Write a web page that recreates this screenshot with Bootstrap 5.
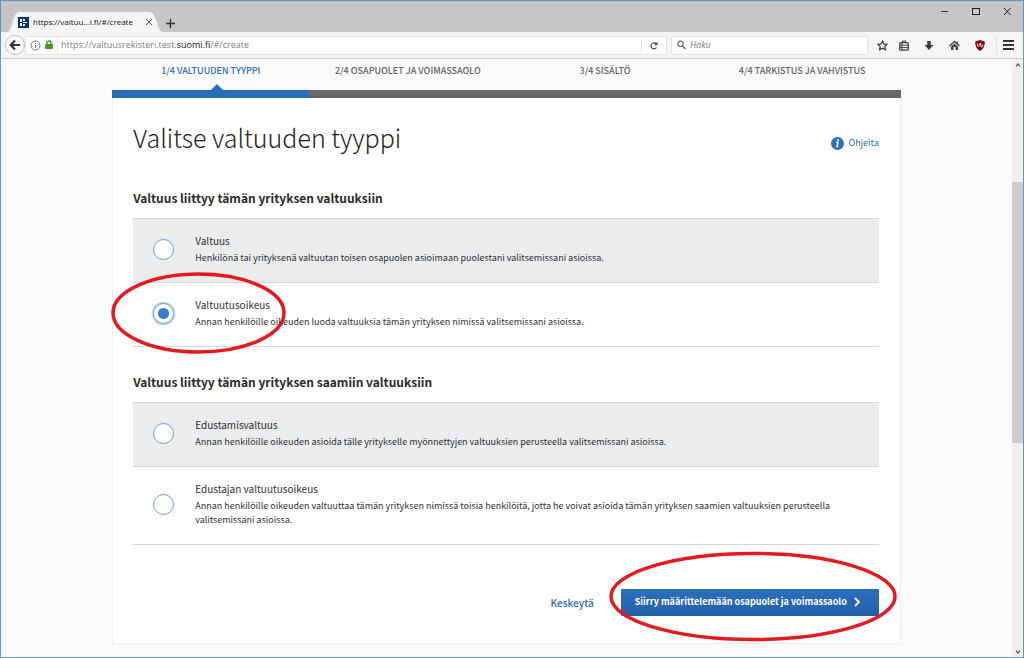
<!DOCTYPE html>
<html lang="fi">
<head>
<meta charset="utf-8">
<meta name="viewport" content="width=device-width, initial-scale=1">
<title>Valitse valtuuden tyyppi</title>
<link href="https://cdn.jsdelivr.net/npm/bootstrap@5.3.0/dist/css/bootstrap.min.css" rel="stylesheet">
<style>
:root { --brand: #2a6ebb; --ink: #2f3133; --line: #d3d6d8; --chrome: "Open Sans", "Noto Sans", sans-serif; }
body { font-family: "Noto Sans CJK SC", "Noto Sans", sans-serif; font-size: 9px; line-height: 14px; color: var(--ink); }
button, input { font: inherit; }
svg { display: block; flex: none; }
.browser { height: 100vh; border: 1px solid #5f9ac9; background: #fafafa; overflow: hidden; }
.icon-btn { border: 0; background: none; padding: 0; color: #3d3d3d; }

/* title bar */
.titlebar { height: 31px; background: #c6c6c6; }
.tab-shape { position: relative; width: 154px; height: 20px; margin-left: 7px; color: #111; font: 8px/20px var(--chrome); }
.tab-shape > svg { position: absolute; inset: 0; }
.tab-inner { position: relative; padding: 0 5px 0 10px; }
.win-controls { padding: 5px 10px 0 0; gap: 20px; }

/* tool bar */
.toolbar { height: 27px; background: #f5f5f5; border-bottom: 1px solid #cfcfcf; font: 9px/18px var(--chrome); padding: 0 9px 0 4px; }
.back-btn { width: 20px; height: 20px; border: 1px solid #bdbdbd; border-radius: 50%; background: #fcfcfc; z-index: 1; }
.field { height: 19px; background: #fff; border: 1px solid #e3e3e3; }
.address { color: #808080; border-left: 1px solid #e6e6e6; padding-left: 3px; }
.address b { font-weight: 400; color: #111; }
.reload { border-left: 1px solid #ddd; padding: 0 8px; }
.search-field { width: 197px; padding: 0 5px; gap: 4px; }
.search-field input { border: 0; outline: 0; background: none; padding: 0; min-width: 0; font-style: italic; }
.search-field input::placeholder { color: #777; opacity: 1; }
.tools { gap: 11px; padding-left: 9px; }
.menu-sep { border-left: 1px solid #e2e2e2; padding-left: 6px; }

/* page */
.viewport { min-height: 0; }
.sheet { width: 78%; min-width: 560px; margin: 0 auto; }
.steps { list-style: none; height: 31px; padding: 4px 0 0; margin: 0; color: #5f6366; font-size: 9px; line-height: 16px; font-weight: 500; text-align: center; text-transform: uppercase; }
.steps .current { color: var(--brand); position: relative; }
.steps .current::after { content: ""; position: absolute; top: 21px; left: 50%; border: 6px solid transparent; border-top: 0; border-bottom-color: var(--brand); }
.bar { height: 8px; background: #65686a; }
.bar > div { width: 25%; height: 100%; background: var(--brand); }
.panel { background: #fff; border: 1px solid #efefef; border-top: 0; padding: 19px 21px 27px 20px; }
h1 { font-size: 25px; line-height: 40px; font-weight: 300; margin: 0; color: #222; }
h2 { font-size: 12px; line-height: 20px; font-weight: 700; margin: 0; color: #2b2b2b; }
.heading { margin-bottom: 31px; }
.help { color: var(--brand); gap: 4px; padding-top: 12px; text-decoration: none; }
.options { border-top: 1px solid var(--line); margin: 10px 0 25px; }
.option { position: relative; border-bottom: 1px solid var(--line); padding: 15px 40px 17px 20px; gap: 20px; }
.option:first-child { background: #ebeced; }
.option .form-check-input { flex: none; width: 21px; height: 21px; margin: 0 1px 0 0; border: 1px solid #6f9bd0; background-color: #fff; }
.option .form-check-input:checked { background-color: #fff; background-image: radial-gradient(circle, #3a7cc5 5px, #fff 6px); box-shadow: 0 0 2px 1px #a9c8e8; }
.option-name { display: block; font-size: 10px; line-height: 14px; margin-bottom: 3px; }
.option-text { display: block; }
.actions { gap: 27px; padding-top: 19px; }
.actions a { color: var(--brand); font-size: 10px; font-weight: 500; text-decoration: none; }
.next-btn { border: 0; border-radius: 1px; padding: 6px 19px 7px 14px; font-weight: 700; color: #fff; background: linear-gradient(#2b70bf, #245fa6); gap: 7px; }
.ring { position: absolute; pointer-events: none; overflow: visible; z-index: 2; }
.ring ellipse { fill: none; stroke: #e21b23; stroke-width: 3.5; }
.ring-option { left: -21px; top: -10px; width: 173px; height: 80px; }
.ring-next { left: -11px; top: -36px; width: 286px; height: 87px; }
.scrollbar { width: 11px; background: #f0f0f0; flex: none; padding: 3px 0 2px; }
.scroll-space { flex: 114 0 0; }
.scroll-thumb { flex: 262 0 0; background: #cdcdcd; }
.scroll-rest { flex: 206 0 0; }
</style>
</head>
<body>
<div class="browser d-flex flex-column">
  <header>
    <div class="titlebar d-flex align-items-end">
      <div class="tab-shape">
        <svg width="154" height="20" viewBox="0 0 154 20"><path d="M0 20C5 18 4 0 12 0H141C149 0 149 18 154 20Z" fill="#f5f5f5"/></svg>
        <div class="tab-inner d-flex align-items-center">
          <svg width="11" height="11" viewBox="0 0 11 11"><rect width="11" height="11" fill="#05347c"/><path d="M2 2h2v3H2zM2 6h2v3H2zM5 5h4v1H5zM5 2h2v2H5zM5 7h2v2H5z" fill="#fff"/></svg>
          <span class="ms-1 flex-grow-1 text-nowrap">https://valtuu...i.fi/#/create</span>
          <button class="icon-btn me-1" aria-label="Sulje välilehti"><svg width="8" height="8" viewBox="0 0 8 8"><path d="M1 1l6 6M7 1L1 7" stroke="#555"/></svg></button>
        </div>
      </div>
      <button class="icon-btn ms-1 mb-1" aria-label="Uusi välilehti"><svg width="9" height="9" viewBox="0 0 9 9"><path d="M4.500 0v9M0 4.500h9" stroke="#333" stroke-width="1.400"/></svg></button>
      <div class="win-controls d-flex ms-auto align-self-start">
        <button class="icon-btn" aria-label="Pienennä"><svg width="10" height="10" viewBox="0 0 10 10"><path d="M0 5.500h7" stroke="#333"/></svg></button>
        <button class="icon-btn" aria-label="Suurenna"><svg width="10" height="10" viewBox="0 0 10 10"><rect x="1.500" y="2.500" width="7" height="6" fill="none" stroke="#222"/></svg></button>
        <button class="icon-btn" aria-label="Sulje"><svg width="12" height="10" viewBox="0 0 12 10"><path d="M3 2l6.500 7M9.500 2L3 9" stroke="#222"/></svg></button>
      </div>
    </div>
    <div class="toolbar d-flex align-items-center">
      <button class="back-btn icon-btn p-0 d-flex align-items-center justify-content-center flex-shrink-0" aria-label="Takaisin"><svg width="12" height="12" viewBox="0 0 12 12"><path d="M6 1.500L1.800 6 6 10.500M2 6h9" fill="none" stroke="#333" stroke-width="2.200"/></svg></button>
      <div class="field d-flex align-items-center flex-grow-1">
        <svg class="ms-1" width="11" height="11" viewBox="0 0 11 11"><circle cx="5.500" cy="5.500" r="4.500" fill="none" stroke="#777"/><path d="M5.500 5v3M5.500 2.800v1.200" stroke="#666"/></svg>
        <svg class="mx-1" width="8" height="10" viewBox="0 0 8 10"><path d="M2 5V3a2 2 0 0 1 4 0v2" fill="none" stroke="#4a9a23" stroke-width="1.500"/><rect y="4" width="8" height="5" rx="1" fill="#4a9a23"/></svg>
        <span class="address flex-grow-1 text-nowrap">https://valtuusrekisteri.test.<b>suomi.fi</b>/#/create</span>
        <button class="icon-btn reload" aria-label="Lataa uudelleen"><svg width="8" height="9" viewBox="0 0 8 9"><path d="M6.500 6.500A3 3 0 1 1 6 2.500" fill="none" stroke="#555" stroke-width="1.300"/><path d="M7.500 .5v3.800H4z" fill="#555"/></svg></button>
      </div>
      <div class="field search-field d-flex align-items-center ms-1">
        <svg width="9" height="10" viewBox="0 0 9 10"><circle cx="3.500" cy="3.800" r="2.700" fill="none" stroke="#666" stroke-width="1.200"/><path d="M5.500 6L8.500 9" stroke="#666" stroke-width="1.500"/></svg>
        <input class="flex-grow-1" type="text" placeholder="Haku" aria-label="Haku">
      </div>
      <div class="tools d-flex align-items-center">
        <button class="icon-btn" aria-label="Kirjanmerkki"><svg width="11" height="11" viewBox="0 0 11 11"><path d="M5.500 1l1.400 2.900 3.200.4-2.300 2.200.6 3.200-2.900-1.500-2.900 1.500.6-3.200L.9 4.300l3.200-.4z" fill="none" stroke="#444" stroke-width="1.300"/></svg></button>
        <button class="icon-btn" aria-label="Kirjanmerkit"><svg width="10" height="11" viewBox="0 0 10 11"><rect x=".7" y="2.700" width="8.600" height="7.500" rx="1" fill="none" stroke="#444" stroke-width="1.300"/><path d="M3.500 3V1h3v2M1 5.200h8M1 7.600h8M3 3v7" fill="none" stroke="#444"/></svg></button>
        <button class="icon-btn ms-1" aria-label="Lataukset"><svg width="10" height="11" viewBox="0 0 10 11"><path d="M3.200 1h3.600v4h2.700L5 10 .5 5h2.700z" fill="#3d3d3d"/></svg></button>
        <button class="icon-btn ms-1" aria-label="Etusivu"><svg width="11" height="11" viewBox="0 0 11 11"><path d="M.5 6l5-4.500 5 4.500M8.500 1.500v2" fill="none" stroke="#444" stroke-width="1.400"/><path d="M2 6.500L5.500 3.400 9 6.500V10H6.500V7h-2v3H2z" fill="#444"/></svg></button>
        <button class="icon-btn ms-1" aria-label="uBlock"><svg width="10" height="11" viewBox="0 0 10 11"><path d="M5 0l4.800 1.500C10 6 8.500 9 5 11 1.500 9 0 6 .2 1.500z" fill="#800610"/><path d="M2.300 3.500v1.700a1 1 0 0 0 2 0V3.500M5.500 3v3a1.200 1.200 0 1 0 1-1.500" fill="none" stroke="#fff" stroke-width=".8"/></svg></button>
        <button class="icon-btn menu-sep" aria-label="Valikko"><svg width="11" height="18" viewBox="0 0 11 18"><path d="M0 5h11M0 9h11M0 13h11" stroke="#333" stroke-width="2"/></svg></button>
      </div>
    </div>
  </header>

  <div class="viewport d-flex flex-grow-1">
    <main class="flex-grow-1 overflow-hidden">
      <div class="sheet">
        <ol class="steps row g-0">
          <li class="col-3 current" aria-current="step">1/4 Valtuuden tyyppi</li>
          <li class="col-3">2/4 Osapuolet ja voimassaolo</li>
          <li class="col-3">3/4 Sisältö</li>
          <li class="col-3">4/4 Tarkistus ja vahvistus</li>
        </ol>
        <div class="bar"><div></div></div>
        <form class="panel">
          <div class="heading d-flex justify-content-between align-items-center">
            <h1>Valitse valtuuden tyyppi</h1>
            <a class="help d-flex align-items-center" href="#"><svg width="13" height="13" viewBox="0 0 13 13"><circle cx="6.500" cy="6.500" r="6.500" fill="#2a6ebb"/><path d="M5 5.500h2L6 9.500h1.300" fill="none" stroke="#fff" stroke-width="1.400"/><circle cx="7" cy="3.300" r="1" fill="#fff"/></svg>Ohjeita</a>
          </div>
          <h2>Valtuus liittyy tämän yrityksen valtuuksiin</h2>
          <div class="options">
            <div class="option d-flex align-items-center">
              <input class="form-check-input" type="radio" name="type" id="t1">
              <label for="t1"><span class="option-name">Valtuus</span><span class="option-text">Henkilönä tai yrityksenä valtuutan toisen osapuolen asioimaan puolestani valitsemissani asioissa.</span></label>
            </div>
            <div class="option d-flex align-items-center">
              <input class="form-check-input" type="radio" name="type" id="t2" checked>
              <label for="t2"><span class="option-name">Valtuutusoikeus</span><span class="option-text">Annan henkilöille oikeuden luoda valtuuksia tämän yrityksen nimissä valitsemissani asioissa.</span></label>
              <svg class="ring ring-option" viewBox="0 0 173 80"><ellipse cx="86.500" cy="40" rx="85.500" ry="39"/></svg>
            </div>
          </div>
          <h2>Valtuus liittyy tämän yrityksen saamiin valtuuksiin</h2>
          <div class="options">
            <div class="option d-flex align-items-center">
              <input class="form-check-input" type="radio" name="type" id="t3">
              <label for="t3"><span class="option-name">Edustamisvaltuus</span><span class="option-text">Annan henkilöille oikeuden asioida tälle yritykselle myönnettyjen valtuuksien perusteella valitsemissani asioissa.</span></label>
            </div>
            <div class="option d-flex align-items-center">
              <input class="form-check-input" type="radio" name="type" id="t4">
              <label for="t4"><span class="option-name">Edustajan valtuutusoikeus</span><span class="option-text">Annan henkilöille oikeuden valtuuttaa tämän yrityksen nimissä toisia henkilöitä, jotta he voivat asioida tämän yrityksen saamien valtuuksien perusteella valitsemissani asioissa.</span></label>
            </div>
          </div>
          <div class="actions d-flex justify-content-end align-items-center">
            <a href="#">Keskeytä</a>
            <div class="position-relative">
              <button class="next-btn d-flex align-items-center" type="button">Siirry määrittelemään osapuolet ja voimassaolo<svg width="6" height="10" viewBox="0 0 6 10"><path d="M1 1l4 4-4 4" fill="none" stroke="#fff" stroke-width="1.800"/></svg></button>
              <svg class="ring ring-next" viewBox="0 0 286 87"><ellipse cx="143" cy="43.500" rx="142" ry="43"/></svg>
            </div>
          </div>
        </form>
      </div>
    </main>
    <div class="scrollbar d-flex flex-column align-items-center" aria-hidden="true">
      <svg width="6" height="6" viewBox="0 0 6 6"><path d="M1 4.500l2-2.500 2 2.500" fill="none" stroke="#444" stroke-width="1.200"/></svg>
      <div class="scroll-space"></div>
      <div class="scroll-thumb w-100"></div>
      <div class="scroll-rest"></div>
      <svg width="6" height="6" viewBox="0 0 6 6"><path d="M1 1.500l2 2.500 2-2.500" fill="none" stroke="#444" stroke-width="1.200"/></svg>
    </div>
  </div>
</div>
<script src="https://cdn.jsdelivr.net/npm/bootstrap@5.3.0/dist/js/bootstrap.bundle.min.js"></script>
</body>
</html>
